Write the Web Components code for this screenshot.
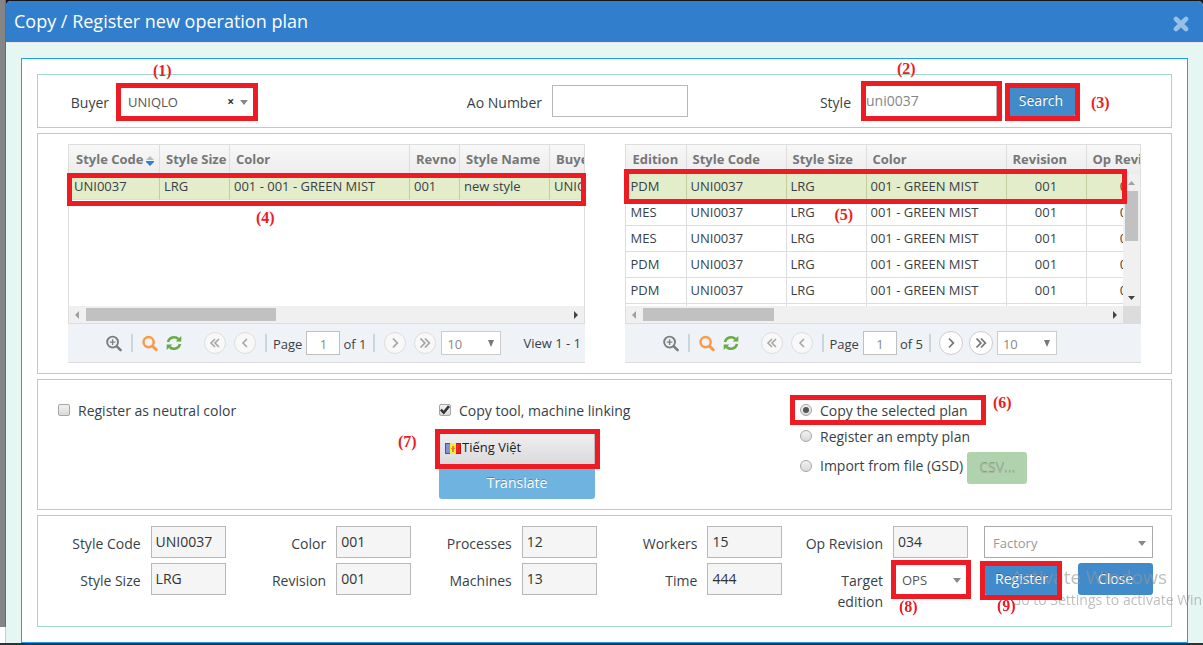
<!DOCTYPE html>
<html lang="en">
<head>
<meta charset="utf-8">
<title>Copy / Register new operation plan</title>
<style>
  html { background: #16202a; }
  body {
    margin: 0;
    padding: 1px 0 2px 6px;
    font: 14px/21px "Open Sans", sans-serif;
    color: #393f47;
    background:
      linear-gradient(#22353f, #22353f) bottom / 100% 2px no-repeat,
      linear-gradient(90deg, #fff 5px, #ccc 5px) left bottom / 6px 18px no-repeat,
      linear-gradient(90deg, #858585 5px, #6a6a6a 5px) left top / 6px 100% no-repeat,
      #16161a;
    overflow: hidden;
  }
</style>
</head>
<body>
<plan-page></plan-page>

<script>
const define = (name, html, init) => {
  const template = document.createElement('template');
  template.innerHTML = html;
  customElements.define(name, class extends HTMLElement {
    connectedCallback() {
      if (this.shadowRoot) return;
      const root = this.attachShadow({ mode: 'open' });
      root.append(template.content.cloneNode(true));
      if (init) init(this, root);
    }
  });
};

/* Modal window: blue title bar and a framed body */
define('plan-dialog', `
<style>
  :host { display: block; background: #e6f7f3; border-radius: 5px 5px 0 0; overflow: hidden; }
  header { display: flex; align-items: center; justify-content: space-between; height: 41px; padding: 0 14px 0 8px; background: #307ecc; border-bottom: 1px solid #e5e5e5; }
  h1 { margin: 0; padding-bottom: 2px; font-size: 18px; line-height: 24px; font-weight: 400; color: #fff; }
  button { display: flex; padding: 0; border: 0; background: none; margin-top: 4px; }
  main { display: flex; flex-direction: column; gap: 5px; margin: 15px 15px 0; padding: 15px; background: #fff; border: 1px solid #1e9ff2; }
</style>
<header><h1></h1>
  <button aria-label="Close window"><svg width="16" height="16" viewBox="0 0 16 16"><path d="M3 3l10 10M13 3L3 13" stroke="#98bfe6" stroke-width="4.6" stroke-linecap="round"/></svg></button>
</header>
<main><slot></slot></main>`,
(host, root) => { root.querySelector('h1').textContent = host.getAttribute('heading'); });

/* Bordered group of controls */
define('plan-section', `
<style>
  :host { display: block; box-sizing: border-box; border: 1px solid #a0d8ca; padding: 10px 0; }
</style><slot></slot>`);

/* Red numbered frame drawn round what is slotted in */
define('call-out', `
<style>
  :host { display: block; position: relative; }
  i { position: absolute; z-index: 5; inset: var(--frame, -4px); border: 5px solid #ed1c24; pointer-events: none; }
  b { position: absolute; z-index: 6; inset: var(--note); font: bold 16px/18px "Liberation Serif", serif; color: #ed1c24; white-space: nowrap; }
</style>
<slot></slot><i></i><b></b>`,
(host, root) => { root.querySelector('b').textContent = '(' + host.getAttribute('step') + ')'; });

define('plan-button', `
<style>
  :host { display: block; }
  button { display: block; width: 100%; height: 32px; padding: 0; border: 0; border-radius: 3px; background: #428bca; color: #fff; font: inherit; line-height: 28px; text-shadow: 0 -1px 0 rgba(0,0,0,.25); }
  :host([kind=info]) button { background: #6fb3e0; }
  :host([kind=csv]) button { background: #b0d2ac; color: #a5b5a5; }
</style>
<button><slot></slot></button>`,
(host, root) => { if (host.hasAttribute('disabled')) root.querySelector('button').disabled = true; });

/* Right-aligned label with a text box */
define('plan-field', `
<style>
  :host { display: flex; gap: 10px; }
  label { flex: 1; padding: 7px 0 0 15px; text-align: right; }
  input { box-sizing: border-box; width: var(--control, 75px); height: 32px; margin: 0; padding: 0 4px 2px; border: 1px solid #b8b8b8; border-radius: 0; background: #fff; color: #858585; font: inherit; }
  input[readonly] { background: #f5f5f5; color: #333; }
  call-out { --frame: -4px -5px -4px 0; --note: -25px auto auto 36px; }
</style>
<label for="box"></label><input id="box">`,
(host, root) => {
  const input = root.querySelector('input');
  root.querySelector('label').textContent = host.getAttribute('label');
  input.value = host.getAttribute('value') || '';
  input.readOnly = host.hasAttribute('readonly');
  if (host.hasAttribute('step')) {
    const frame = document.createElement('call-out');
    frame.setAttribute('step', host.getAttribute('step'));
    input.replaceWith(frame);
    frame.append(input);
    frame.style.height = '32px';
  }
});

/* Drop-down with a small arrow, an optional label and a clear button */
define('plan-select', `
<style>
  :host { display: flex; gap: 10px; }
  label { flex: 1; padding: 7px 0 0 15px; text-align: right; }
  label:empty { display: none; }
  .wrap { display: grid; align-items: center; width: var(--control, 75px); }
  .wrap > * { grid-area: 1 / 1; }
  .host { height: 32px; }
  select { appearance: none; box-sizing: border-box; width: 100%; height: 32px; margin: 0; padding: 2px 8px 0; border: 1px solid #aaa; border-radius: 0; background: #fff; color: var(--ink, #555); font: inherit; font-size: 13px; }
  svg { justify-self: end; margin: 2px 7px 0 0; pointer-events: none; }
  button { justify-self: end; margin: 2px 21px 0 0; padding: 0; border: 0; background: none; color: #333; font: bold 12px/16px "Open Sans", sans-serif; display: none; }
  :host([clear]) button { display: block; }
</style>
<label for="list"></label>
<div class="host"><div class="wrap">
  <select id="list"><option></option></select>
  <button aria-label="Clear">×</button>
  <svg width="8" height="5"><path d="M0 0h8L4 5z" fill="#888"/></svg>
</div></div>`,
(host, root) => {
  const label = root.querySelector('label');
  label.textContent = host.getAttribute('label') || '';
  root.querySelector('option').textContent = host.getAttribute('value');
  if (!label.textContent) {
    root.querySelector('select').setAttribute('aria-label', host.getAttribute('value'));
    root.querySelector('.host').style.flex = '1';
  }
  if (host.hasAttribute('step')) {
    const frame = document.createElement('call-out');
    frame.setAttribute('step', host.getAttribute('step'));
    const wrap = root.querySelector('.wrap');
    wrap.replaceWith(frame);
    frame.append(wrap);
  }
});

/* Tick box or radio with its label */
define('plan-choice', `
<style>
  :host { display: flex; align-items: center; gap: 8px; height: 20px; }
  input { appearance: none; display: grid; place-items: center; box-sizing: border-box; width: 12px; height: 12px; margin: 0; border: 1px solid #a6a6a6; border-radius: 2px; background: linear-gradient(#f2f2f2, #d9d9d9); }
  input[type=radio] { border-radius: 50%; }
  input[type=radio]:checked::before { content: ""; width: 6px; height: 6px; border-radius: 50%; background: #555; }
  input[type=checkbox]:checked::before { content: ""; width: 10px; height: 10px; background: #333; clip-path: polygon(0 55%, 18% 38%, 36% 58%, 80% 2%, 100% 20%, 38% 95%); }
  label { white-space: nowrap; }
</style>
<input id="pick"><label for="pick"><slot></slot></label>`,
(host, root) => {
  const input = root.querySelector('input');
  input.type = host.getAttribute('type');
  input.checked = host.hasAttribute('checked');
});

/* Paging bar below a grid */
define('grid-pager', `
<style>
  :host { display: flex; align-items: center; height: 38px; padding-left: 38px; background: #eff3f8; border-bottom: 1px solid #ddd; white-space: nowrap; overflow: hidden; font-size: 13px; }
  button { display: flex; align-items: center; justify-content: center; flex: none; width: 16px; height: 18px; margin: 0; padding: 0; border: 0; background: none; }
  .bar { flex: none; width: 2px; height: 18px; background: #c9d6dc; }
  .tools, .move { display: flex; align-items: center; gap: 8px; }
  .tools .bar { margin: 0 1px; }
  .move { margin: 0 9px 0 22px; }
  .move.next { margin: 0 5px 0 9px; }
  .move button { box-sizing: border-box; width: 22px; height: 22px; border: 1px solid #ddd; border-radius: 50%; background: #f8f8f8; color: #a5a5a5; }
  :host([more]) .next button { width: 24px; height: 24px; border-color: #ccc; background: #fff; color: #777; }
  :host([more]) .next { margin: 0 4px 0 8px; gap: 6px; }
  label { padding: 2px 4px 0 6px; }
  .of { padding: 2px 7px 0 3px; }
  :host([more]) .of { padding-right: 6px; }
  input, select { box-sizing: border-box; flex: none; height: 24px; margin: 0; border: 1px solid #c0c0c0; border-radius: 0; background: #fff; color: #888; font: inherit; }
  input { width: 34px; padding: 2px 0 0; text-align: center; }
  .size { display: grid; align-items: center; width: 60px; flex: none; }
  .size > * { grid-area: 1 / 1; }
  select { appearance: none; padding: 2px 5px 0; border-color: #ccc; }
  .size svg { justify-self: end; margin-right: 7px; }
  .view { margin-left: 22px; }
</style>
<div class="tools">
  <button aria-label="View record"><svg width="17" height="17" viewBox="0 0 17 17" fill="none" stroke="#7d7d7d"><circle cx="7" cy="7" r="5.8" stroke-width="2"/><path d="M11.5 11.5l4 4" stroke-width="2.8" stroke-linecap="round"/><path d="M4 7h6M7 4v6" stroke-width="1.4"/></svg></button>
  <span class="bar"></span>
  <button aria-label="Find records"><svg width="17" height="17" viewBox="0 0 17 17" fill="none" stroke="#ff9842"><circle cx="7" cy="7" r="5.4" stroke-width="2.6"/><path d="M11.5 11.5l3.6 3.6" stroke-width="3.2" stroke-linecap="round"/></svg></button>
  <button aria-label="Reload grid"><svg width="16" height="16" viewBox="0 0 16 16"><path d="M2 7A6.2 6.2 0 0 1 12.4 4M14 9A6.2 6.2 0 0 1 3.6 12" fill="none" stroke="#69aa46" stroke-width="2.5"/><path d="M15.3 1v5.6H9.7zM.7 15V9.4h5.6z" fill="#69aa46"/></svg></button>
</div>
<div class="move">
  <button aria-label="First page"><svg width="12" height="12" fill="none" stroke="currentColor" stroke-width="1.6"><path d="M6 2L2 6l4 4M10 2L6 6l4 4"/></svg></button>
  <button aria-label="Previous page"><svg width="12" height="12" fill="none" stroke="currentColor" stroke-width="1.6"><path d="M8 2L4 6l4 4"/></svg></button>
</div>
<span class="bar"></span>
<label for="page">Page</label><input id="page"><span class="of"></span>
<span class="bar"></span>
<div class="move next">
  <button aria-label="Next page"><svg width="12" height="12" fill="none" stroke="currentColor" stroke-width="1.8"><path d="M4 1.500L8.300 6 4 10.500"/></svg></button>
  <button aria-label="Last page"><svg width="12" height="12" fill="none" stroke="currentColor" stroke-width="1.8"><path d="M1.500 1.500L5.800 6 1.500 10.500M6 1.500L10.300 6 6 10.500"/></svg></button>
</div>
<div class="size"><select aria-label="Rows per page"><option>10</option></select><svg width="6" height="7"><path d="M0 0h6L3 7z" fill="#777"/></svg></div>
<span class="view"></span>`,
(host, root) => {
  root.querySelector('input').value = '1';
  root.querySelector('.of').textContent = 'of ' + host.getAttribute('pages');
  root.querySelector('.view').textContent = host.getAttribute('view') || '';
});

/* Data table with drawn scroll bars; columns are "title:width", a trailing * centres */
define('plan-grid', `
<style>
  :host { display: block; min-width: 0; }
  call-out { display: block; }
  .clip { overflow: hidden; border: 1px solid #ddd; }
  .area { display: grid; grid-template-columns: minmax(0, 1fr) auto; }
  .head { overflow: hidden; background: linear-gradient(#f8f8f8, #ececec); }
  .body { height: 132px; overflow: hidden; }
  table { table-layout: fixed; border-collapse: separate; border-spacing: 0; width: 0; font-size: 13px; line-height: 18px; }
  th, td { box-sizing: border-box; overflow: hidden; white-space: nowrap; text-align: left; border-right: 1px solid #ddd; }
  th { height: 29px; padding: 0 0 2px 6px; font-weight: 700; color: #777; }
  td { height: 26px; padding: 0 0 1px 4px; border-bottom: 1px solid #ddd; color: #393f47; }
  th:first-child { padding-left: 7px; }
  td:first-child { padding-left: 5px; }
  td.mid { text-align: center; padding-left: 0; }
  tr.on td { background: #e4edc9; border-right-color: #c3cd9f; }
  th svg { margin-left: 3px; vertical-align: -2px; }
  .vbar { display: flex; flex-direction: column; align-items: center; width: 17px; box-sizing: border-box; padding: 7px 0 6px; background: #f0f0f0; }
  .vbar span { width: 13px; height: 50px; margin: 6px 0 auto; background: #c1c1c1; }
  .hbar { display: flex; align-items: center; height: 17px; background: #f0f0f0; padding-left: 6px; }
  .hbar span { height: 13px; margin: 0 auto 0 7px; background: #c1c1c1; }
  .hbar .tip { margin-right: 6px; }
  .corner { width: 17px; height: 17px; background: #dcdcdc; }
  :host(:not([tall])) .vbar, :host(:not([tall])) .corner { display: none; }
</style>
<call-out>
<div class="clip">
  <div class="head"><table><thead><tr></tr></thead></table></div>
  <div class="area">
    <div class="body"><table><tbody></tbody></table></div>
    <div class="vbar"><svg width="7" height="4"><path d="M0 4h7L3.500 0z" fill="#a0a0a0"/></svg><span></span><svg width="7" height="4"><path d="M0 0h7L3.500 4z" fill="#444"/></svg></div>
  </div>
  <div class="hbar"><svg width="4" height="8"><path d="M4 0v8L0 4z" fill="#a0a0a0"/></svg><span></span><svg class="tip" width="4" height="8"><path d="M0 0v8l4-4z" fill="#444"/></svg><div class="corner"></div></div>
</div>
</call-out>
<slot></slot>`,
(host, root) => {
  const cols = host.getAttribute('columns').split('|').map(c => {
    const [title, width] = c.split(':');
    return { title, width: parseInt(width), mid: width.endsWith('*') };
  });
  const total = cols.reduce((sum, c) => sum + c.width, 0);
  root.querySelectorAll('table').forEach(t => t.style.width = total + 'px');
  root.querySelector('thead tr').innerHTML = cols.map((c, i) =>
    `<th style="width:${c.width}px">${c.title}${host.hasAttribute('sorted') && i === 0
      ? '<svg width="8" height="10"><path d="M0 4h8L4 0z" fill="#bbb"/><path d="M0 5h8v1L4 10 0 6z" fill="#307ecc"/></svg>' : ''}</th>`).join('');
  root.querySelector('tbody').innerHTML = host.getAttribute('rows').split(';').map((row, i) =>
    `<tr class="${i ? '' : 'on'}">` + row.split('|').map((v, k) =>
      `<td class="${cols[k].mid ? 'mid' : ''}" style="width:${cols[k].width}px">${v}</td>`).join('') + '</tr>').join('');
  root.querySelector('.hbar span').style.width = host.getAttribute('thumb') + 'px';
  const frame = root.querySelector('call-out');
  frame.shadowRoot.querySelector('b').textContent = '(' + host.getAttribute('step') + ')';
});

/* Language drop-down with its flag */
define('language-select', `
<style>
  :host { display: grid; align-items: center; }
  select, svg { grid-area: 1 / 1; }
  select { appearance: none; box-sizing: border-box; width: 100%; height: 34px; margin: 0; padding: 0 0 6px 22px; border: 1px solid #bbb; border-radius: 0; background: linear-gradient(#efeff0, #d9d9db); color: #222; font: inherit; font-size: 13px; }
  svg { z-index: 1; margin: 0 0 3px 6px; pointer-events: none; }
</style>
<select aria-label="Language"><option>Tiếng Việt</option></select>
<svg width="16" height="11"><path d="M0 0h5v11H0z" fill="#3b54c4"/><path d="M1 1h4v9H1z" fill="#8090dc"/><path d="M5 0h6v11H5z" fill="#ffe83a"/><path d="M11 0h5v11h-5z" fill="#c01414"/><path d="M11 1h4v9h-4z" fill="#f02020"/><path d="M7 3h2v2H7zM6 5h4v1H6zM7 6h2v3H7z" fill="#d88a28"/></svg>`);

define('desktop-watermark', `
<style>
  :host { position: fixed; z-index: 3; left: calc(100% - 192px); top: 565px; width: 192px; overflow: hidden; white-space: nowrap; color: rgba(150,150,150,.62); pointer-events: none; }
  p { margin: 0; }
  .big { font-size: 19px; line-height: 24px; }
  .small { font-size: 14px; line-height: 21px; }
</style>
<p class="big">Activate Windows</p><p class="small">Go to Settings to activate Windows.</p>`);

define('plan-page', `
<style>
  :host { display: block; }
  .search { display: grid; grid-template-columns: 217fr 433fr 309fr 174fr; --control: 136px; }
  .search call-out { width: 68px; margin-left: 10px; --frame: -2px -5px -4px -2px; --note: 9px auto auto 84px; }
  .grids { display: grid; grid-template-columns: minmax(0, 1fr) minmax(0, 1fr); gap: 40px; padding: 0 30px; }
  .options { display: grid; grid-template-columns: 381fr 361fr 353fr; padding: 10px 18px 0 20px; }
  .tool { width: 156px; }
  .tool call-out { margin-top: 13px; --note: 0 auto auto -41px; --frame: -4px -5px -2px -4px; }
  .radios { display: flex; flex-direction: column; align-items: flex-start; gap: 6px; }
  .radios call-out { --frame: -5px -18px -5px -10px; --note: -6px -44px auto auto; }
  .file { display: flex; align-items: center; gap: 4px; padding-bottom: 5px; }
  .file plan-choice { padding-bottom: 5px; }
  .file plan-button { width: 60px; }
  .result { display: grid; grid-template-columns: repeat(5, minmax(0, 1fr)) 185px; row-gap: 5px; padding: 0 18px 4px 2px; }
  .factory { padding-left: 16px; --ink: #999; }
  .actions { display: flex; justify-content: space-between; align-items: start; padding-left: 16px; }
  .actions plan-button { width: 75px; }
  .actions call-out { --frame: -2px -3px -5px -4px; --note: 34px auto auto 13px; }
  .buyer { --frame: -2px -3px -4px; --note: -23px auto auto 34px; }
  .target { --frame: -3px -3px -4px -2px; --note: 35px auto auto 6px; }
  .left { --frame: 29px -1px 118px; --note: 65px auto auto 188px; }
  .right { --frame: 25px 14px 120px -1px; --note: 62px auto auto 210px; }
</style>
<plan-dialog heading="Copy / Register new operation plan">
  <plan-section><div class="search">
    <plan-select class="buyer" label="Buyer" value="UNIQLO" clear step="1"></plan-select>
    <plan-field label="Ao Number"></plan-field>
    <plan-field label="Style" value="uni0037" step="2"></plan-field>
    <call-out step="3"><plan-button>Search</plan-button></call-out>
  </div></plan-section>
  <plan-section><div class="grids">
    <plan-grid class="left" step="4" sorted thumb="190"
      columns="Style Code:91|Style Size:70|Color:180|Revno:50|Style Name:90|Buyer:90"
      rows="UNI0037|LRG|001 - 001 - GREEN MIST|001|new style|UNIQLO">
      <grid-pager pages="1" view="View 1 - 1"></grid-pager>
    </plan-grid>
    <plan-grid class="right" step="5" tall thumb="131"
      columns="Edition:61|Style Code:100|Style Size:80|Color:140|Revision:80*|Op Revision:90*"
      rows="PDM|UNI0037|LRG|001 - GREEN MIST|001|001;MES|UNI0037|LRG|001 - GREEN MIST|001|001;MES|UNI0037|LRG|001 - GREEN MIST|001|001;PDM|UNI0037|LRG|001 - GREEN MIST|001|001;PDM|UNI0037|LRG|001 - GREEN MIST|001|001;|||||">
      <grid-pager pages="5" more></grid-pager>
    </plan-grid>
  </div></plan-section>
  <plan-section><div class="options">
    <plan-choice type="checkbox">Register as neutral color</plan-choice>
    <div class="tool">
      <plan-choice type="checkbox" checked>Copy tool, machine linking</plan-choice>
      <call-out step="7"><language-select></language-select></call-out>
      <plan-button kind="info">Translate</plan-button>
    </div>
    <div class="radios">
      <call-out step="6"><plan-choice type="radio" checked>Copy the selected plan</plan-choice></call-out>
      <plan-choice type="radio">Register an empty plan</plan-choice>
      <div class="file"><plan-choice type="radio">Import from file (GSD)</plan-choice><plan-button kind="csv" disabled>CSV...</plan-button></div>
    </div>
  </div></plan-section>
  <plan-section><div class="result">
    <plan-field label="Style Code" value="UNI0037" readonly></plan-field>
    <plan-field label="Color" value="001" readonly></plan-field>
    <plan-field label="Processes" value="12" readonly></plan-field>
    <plan-field label="Workers" value="15" readonly></plan-field>
    <plan-field label="Op Revision" value="034" readonly></plan-field>
    <plan-select class="factory" style="--control:100%" value="Factory"></plan-select>
    <plan-field label="Style Size" value="LRG" readonly></plan-field>
    <plan-field label="Revision" value="001" readonly></plan-field>
    <plan-field label="Machines" value="13" readonly></plan-field>
    <plan-field label="Time" value="444" readonly></plan-field>
    <plan-select class="target" label="Target edition" value="OPS" step="8"></plan-select>
    <div class="actions">
      <call-out step="9"><plan-button>Register</plan-button></call-out>
      <plan-button>Close</plan-button>
    </div>
  </div></plan-section>
</plan-dialog>
<desktop-watermark></desktop-watermark>`);
</script>
</body>
</html>
